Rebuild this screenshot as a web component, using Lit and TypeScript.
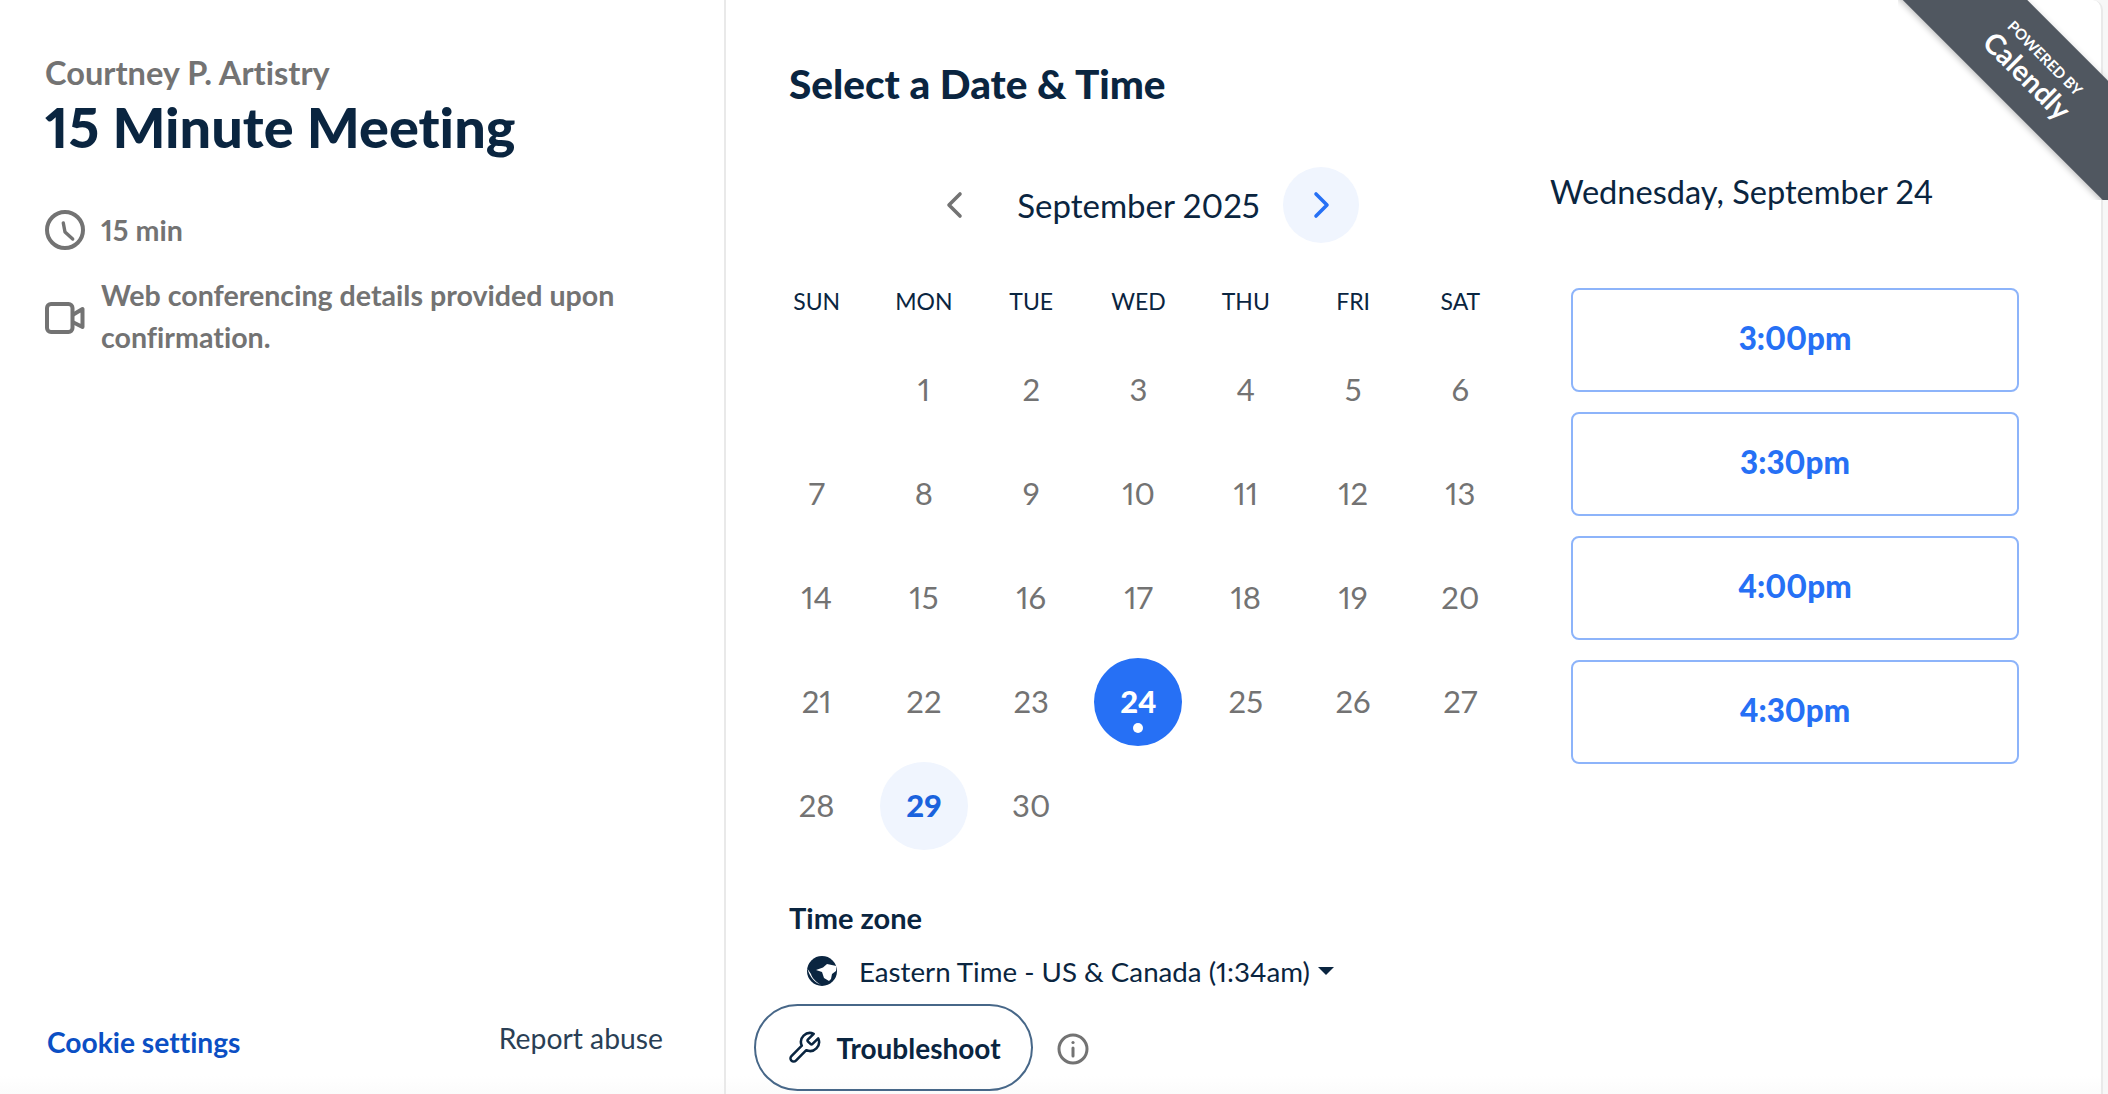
import { LitElement, css, html } from 'lit';
import { customElement } from 'lit/decorators.js';

const WEEKDAYS = ['SUN', 'MON', 'TUE', 'WED', 'THU', 'FRI', 'SAT'];
const SLOTS = ['3:00pm', '3:30pm', '4:00pm', '4:30pm'];
const SELECTED = 24;
const AVAILABLE = 29;

@customElement('app-root')
export class AppRoot extends LitElement {
  static override styles = css`
    :host {
      display: block;
      width: 2108px;
      height: 1094px;
      overflow: hidden;
      background: #f7f7f7;
      font-family: Lato, 'Liberation Sans', sans-serif;
      font-variant-ligatures: none;
      font-variant-numeric: proportional-nums;
      color: #0a2540;
    }

    .page {
      position: relative;
      width: 2108px;
      height: 1094px;
    }

    .panel {
      display: grid;
      grid-template-columns: 726px 1fr;
      box-sizing: border-box;
      width: 2103px;
      height: 1094px;
      border-right: 2px solid #e9e9e9;
      border-top-right-radius: 10px;
      background: linear-gradient(to bottom, #fff 1076px, #fbfbfb 1094px);
    }

    .info {
      display: flex;
      flex-direction: column;
      box-sizing: border-box;
      padding: 55px 60px 34px 45px;
      border-right: 2px solid #e9e9e9;
      color: #737373;
    }

    .owner {
      font-size: 32.6px;
      line-height: 36px;
      font-weight: 700;
    }

    h1 {
      margin: 4px 0 0;
      font-size: 55.8px;
      line-height: 64px;
      font-weight: 900;
      color: #0a2540;
    }

    .detail {
      display: flex;
      align-items: center;
      gap: 16px;
      font-size: 28.6px;
      line-height: 42px;
      font-weight: 700;
    }

    .detail svg {
      flex: none;
      width: 40px;
      height: 40px;
    }

    .duration {
      margin-top: 50px;
    }

    .conferencing {
      margin-top: 23px;
    }

    .conferencing svg {
      margin-top: 3px;
    }

    .footer {
      display: flex;
      justify-content: space-between;
      align-items: center;
      margin-top: auto;
      padding-left: 2px;
      line-height: 36px;
    }

    .cookie {
      font-size: 28.2px;
      font-weight: 700;
      color: #0b4fc4;
    }

    .report {
      position: relative;
      top: -4px;
      left: -1px;
      font-size: 28.3px;
      color: #2a3f55;
    }

    .booking {
      padding: 62px 0 0 37px;
    }

    .booking h2 {
      margin: 0 0 0 26px;
      font-size: 40.5px;
      line-height: 44px;
      font-weight: 900;
    }

    .columns {
      display: flex;
      margin-top: 61px;
    }

    .calendar {
      width: 751px;
    }

    .month {
      display: flex;
      align-items: center;
      justify-content: center;
      height: 76px;
      padding-right: 2px;
      box-sizing: border-box;
      font-size: 33px;
    }

    .month .label {
      width: 270px;
      margin: 0 10px;
      padding-left: 2px;
      box-sizing: border-box;
      text-align: center;
      white-space: nowrap;
    }

    .chevron {
      display: flex;
      align-items: center;
      justify-content: center;
      width: 76px;
      height: 76px;
      border-radius: 50%;
    }

    .chevron svg {
      width: 28px;
      height: 28px;
    }

    .chevron.next {
      background: #f0f5fe;
    }

    .weekdays,
    .days {
      display: grid;
      grid-template-columns: repeat(7, 1fr);
      justify-items: center;
    }

    .weekdays {
      margin-top: 38px;
      font-size: 23px;
      line-height: 40px;
    }

    .days {
      grid-auto-rows: 104px;
      align-items: center;
      margin-top: 17px;
      font-size: 31px;
      color: #737373;
    }

    .day {
      position: relative;
      display: flex;
      align-items: center;
      justify-content: center;
      box-sizing: border-box;
      width: 88px;
      height: 88px;
      padding-bottom: 2px;
      border-radius: 50%;
    }

    .day.available {
      background: #f0f5fe;
      color: #1a62dd;
      font-weight: 900;
    }

    .day.selected {
      background: #2670f5;
      color: #fff;
      font-weight: 900;
    }

    .day.selected::after {
      content: '';
      position: absolute;
      left: 39px;
      bottom: 13px;
      width: 10px;
      height: 10px;
      border-radius: 50%;
      background: #fff;
    }

    .timezone {
      margin: 42px 0 0 26px;
      font-size: 29px;
      line-height: 36px;
      font-weight: 700;
    }

    .zone {
      display: flex;
      align-items: center;
      height: 40px;
      margin: 15px 0 0 44px;
      font-size: 27.7px;
    }

    .zone svg.globe {
      width: 30px;
      height: 30px;
      margin-right: 22px;
    }

    .zone .caret {
      margin-left: 8px;
      width: 0;
      height: 0;
      border-left: 8px solid transparent;
      border-right: 8px solid transparent;
      border-top: 8px solid #0a2540;
    }

    .tools {
      display: flex;
      align-items: center;
      margin: 13px 0 0 -9px;
    }

    .troubleshoot {
      display: flex;
      align-items: center;
      justify-content: center;
      gap: 14px;
      box-sizing: border-box;
      width: 279px;
      height: 87px;
      border: 2px solid #476788;
      border-radius: 44px;
      font-size: 28px;
      font-weight: 700;
    }

    .troubleshoot svg {
      width: 36px;
      height: 36px;
    }

    .help {
      width: 32px;
      height: 32px;
      margin: 2px 0 0 24px;
    }

    .times {
      margin-left: 36px;
    }

    .selected-date {
      font-size: 32.6px;
      line-height: 50px;
      white-space: nowrap;
    }

    .slots {
      display: flex;
      flex-direction: column;
      gap: 20px;
      margin: 71px 0 0 21px;
    }

    .slot {
      display: flex;
      align-items: center;
      justify-content: center;
      box-sizing: border-box;
      width: 448px;
      height: 104px;
      padding-bottom: 4px;
      border: 2px solid #8db4fa;
      border-radius: 8px;
      font-size: 31.4px;
      font-weight: 900;
      color: #2670f5;
    }

    .ribbon {
      position: absolute;
      top: 0;
      right: 0;
      width: 210px;
      height: 200px;
      overflow: hidden;
    }

    .ribbon-band {
      position: absolute;
      left: -14px;
      top: 25px;
      width: 300px;
      height: 88px;
      transform: rotate(45deg);
      display: flex;
      flex-direction: column;
      align-items: center;
      justify-content: center;
      background: #505760;
      box-shadow: 0 2px 6px rgba(0, 0, 0, 0.25);
      color: #fff;
    }

    .ribbon-band .powered {
      font-size: 15px;
      line-height: 18px;
      font-weight: 700;
    }

    .ribbon-band .brand {
      font-size: 28.5px;
      line-height: 32px;
      font-weight: 700;
    }
  `;

  private renderDay(day: number | null) {
    if (day === null) return html`<div></div>`;
    const cls = day === SELECTED ? 'day selected' : day === AVAILABLE ? 'day available' : 'day';
    return html`<div class=${cls}>${day}</div>`;
  }

  override render() {
    const days: (number | null)[] = [null, ...Array.from({ length: 30 }, (_, i) => i + 1)];
    return html`
      <div class="page">
        <div class="panel">
          <section class="info">
            <div class="owner">Courtney P. Artistry</div>
            <h1>15 Minute Meeting</h1>
            <div class="detail duration">
              <svg viewBox="0 0 40 40" fill="none" stroke="#737373" stroke-width="4" stroke-linecap="round" stroke-linejoin="round">
                <circle cx="20" cy="20" r="18"></circle>
                <path d="M18.3 13l1.7 9 7.7 7" stroke-width="3.4"></path>
              </svg>
              15 min
            </div>
            <div class="detail conferencing">
              <svg viewBox="0 0 40 40" fill="none" stroke="#737373" stroke-width="4" stroke-linejoin="round">
                <rect x="2" y="6" width="25.5" height="28" rx="4"></rect>
                <path d="M27.5 17l10-6v18l-10-5"></path>
              </svg>
              <span>Web conferencing details provided upon<br />confirmation.</span>
            </div>
            <div class="footer">
              <span class="cookie">Cookie settings</span>
              <span class="report">Report abuse</span>
            </div>
          </section>
          <section class="booking">
            <h2>Select a Date &amp; Time</h2>
            <div class="columns">
              <div class="calendar">
                <div class="month">
                  <span class="chevron">
                    <svg viewBox="0 0 28 28" fill="none" stroke="#737373" stroke-width="3.6" stroke-linecap="round" stroke-linejoin="round">
                      <path d="M19 3L8 14l11 11"></path>
                    </svg>
                  </span>
                  <span class="label">September 2025</span>
                  <span class="chevron next">
                    <svg viewBox="0 0 28 28" fill="none" stroke="#2670f5" stroke-width="3.6" stroke-linecap="round" stroke-linejoin="round">
                      <path d="M9 3l11 11L9 25"></path>
                    </svg>
                  </span>
                </div>
                <div class="weekdays">${WEEKDAYS.map((d) => html`<div>${d}</div>`)}</div>
                <div class="days">${days.map((d) => this.renderDay(d))}</div>
                <div class="timezone">Time zone</div>
                <div class="zone">
                  <svg class="globe" viewBox="0 0 30 30">
                    <circle cx="15" cy="15" r="15" fill="#0a2540"></circle>
                    <path d="M29.5 10L20 8l-4 3.5-7 2.5 6 2 2 6 5 3 2-2 1-5 4-3zM.6 13c1.4 6 5 11 10.4 14.6l3 1.2C9 26 5 22 4 18z" fill="#fff"></path>
                  </svg>
                  <span>Eastern Time - US &amp; Canada (1:34am)</span>
                  <span class="caret"></span>
                </div>
                <div class="tools">
                  <div class="troubleshoot">
                    <svg viewBox="0 0 24 24" fill="none" stroke="#0a2540" stroke-width="1.7" stroke-linecap="round" stroke-linejoin="round">
                      <path d="M14.7 6.3a1 1 0 0 0 0 1.4l1.6 1.6a1 1 0 0 0 1.4 0l3.77-3.77a6 6 0 0 1-7.94 7.94l-6.91 6.91a2.12 2.12 0 0 1-3-3l6.91-6.91a6 6 0 0 1 7.94-7.94l-3.76 3.76z"></path>
                    </svg>
                    Troubleshoot
                  </div>
                  <svg class="help" viewBox="0 0 32 32" fill="none" stroke="#737373" stroke-width="3" stroke-linecap="round">
                    <circle cx="16" cy="16" r="14"></circle>
                    <path d="M16 15v8"></path>
                    <circle cx="16" cy="9.5" r="1.6" fill="#737373" stroke="none"></circle>
                  </svg>
                </div>
              </div>
              <div class="times">
                <div class="selected-date">Wednesday, September 24</div>
                <div class="slots">${SLOTS.map((s) => html`<div class="slot">${s}</div>`)}</div>
              </div>
            </div>
          </section>
        </div>
        <div class="ribbon">
          <div class="ribbon-band">
            <span class="powered">POWERED BY</span>
            <span class="brand">Calendly</span>
          </div>
        </div>
      </div>
    `;
  }
}

declare global {
  interface HTMLElementTagNameMap {
    'app-root': AppRoot;
  }
}
